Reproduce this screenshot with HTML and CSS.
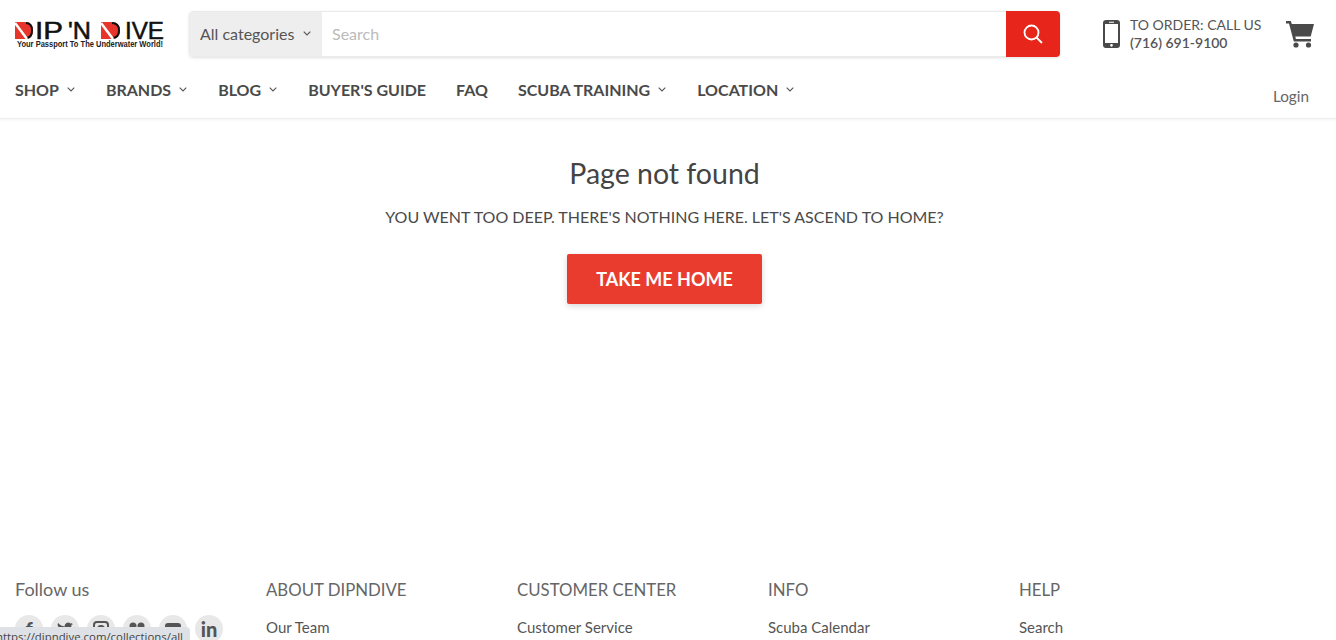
FILE: index.html
```html
<!DOCTYPE html>
<html lang="en">
<head>
<meta charset="utf-8">
<title>Page not found</title>
<link rel="stylesheet" href="styles.css">
</head>
<body>
<header class="site-header">
  <div class="top-row">
    <a class="logo" href="#" aria-label="Dip 'N Dive">
      <svg width="150" height="28" viewBox="0 0 150 28">
        <path class="logo-red" d="M0 1h10c5 0 8 3 8 8.500S15 18 10 18H0z"/>
        <path class="logo-arc" d="M11 2c4 0 6 3 6 7.500S15 17 11 17"/>
        <path class="logo-cut" d="M0 2l12 16"/>
        <text class="logo-big" x="20" y="18" textLength="28" lengthAdjust="spacingAndGlyphs">IP</text>
        <text class="logo-big" x="53" y="18" textLength="23" lengthAdjust="spacingAndGlyphs">'N</text>
        <path class="logo-red" d="M86 1h10c6 0 9 3 9 8.500S102 18 96 18H86z"/>
        <path class="logo-arc" d="M97 2c4.500 0 7 3 7 7.500S101.500 17 97 17"/>
        <path class="logo-cut" d="M86 2l12 16"/>
        <text class="logo-big" x="110" y="18" textLength="39" lengthAdjust="spacingAndGlyphs">IVE</text>
        <text class="logo-small" x="2" y="26" textLength="146" lengthAdjust="spacingAndGlyphs">Your Passport To The Underwater World!</text>
      </svg>
    </a>
    <form class="search">
      <div class="category">
        <span>All categories</span>
        <svg class="chev" width="8" height="5" viewBox="0 0 8 5"><path d="M.7.7L4 4l3.3-3.3"/></svg>
      </div>
      <div class="search-input">Search</div>
      <div class="search-btn">
        <svg width="20" height="20" viewBox="0 0 20 20"><circle cx="8.5" cy="8.500" r="7"/><path d="M13.500 13.500L19 19"/></svg>
      </div>
    </form>
    <div class="order">
      <svg class="phone" width="17" height="28" viewBox="0 0 17 28"><path fill-rule="evenodd" d="M3 0h11a3 3 0 0 1 3 3v22a3 3 0 0 1-3 3H3a3 3 0 0 1-3-3V3a3 3 0 0 1 3-3zM2 4v19h13V4zM6 1.800v.9h5v-.9zM8.500 23.900a1.400 1.400 0 1 0 0 2.800 1.400 1.400 0 0 0 0-2.800z"/></svg>
      <div class="order-text">
        <div>TO ORDER: CALL US</div>
        <div class="order-num">(716) 691-9100</div>
      </div>
    </div>
    <svg class="cart" width="28" height="28" viewBox="0 0 28 28"><path d="M0 1h4.800l1 3H28l-3.300 12.500H9.300l.6 2.500H25v2.500H7.800L3 3.500H0z"/><circle cx="10" cy="25" r="2.600"/><circle cx="22.500" cy="25" r="2.600"/></svg>
  </div>
  <div class="nav-row">
    <nav class="nav">
      <a href="#">SHOP<svg class="chev nav-chev" width="9" height="5" viewBox="0 0 9 5"><path d="M.7.7L4 4l3.300-3.300"/></svg></a>
      <a href="#">BRANDS<svg class="chev nav-chev" width="9" height="5" viewBox="0 0 9 5"><path d="M.7.7L4 4l3.300-3.300"/></svg></a>
      <a href="#">BLOG<svg class="chev nav-chev" width="9" height="5" viewBox="0 0 9 5"><path d="M.7.7L4 4l3.300-3.300"/></svg></a>
      <a href="#">BUYER'S GUIDE</a>
      <a href="#">FAQ</a>
      <a href="#">SCUBA TRAINING<svg class="chev nav-chev" width="9" height="5" viewBox="0 0 9 5"><path d="M.7.7L4 4l3.300-3.300"/></svg></a>
      <a href="#">LOCATION<svg class="chev nav-chev" width="9" height="5" viewBox="0 0 9 5"><path d="M.7.7L4 4l3.300-3.300"/></svg></a>
    </nav>
    <a class="login" href="#">Login</a>
  </div>
</header>
<main class="not-found">
  <h1>Page not found</h1>
  <p>YOU WENT TOO DEEP. THERE'S NOTHING HERE. LET'S ASCEND TO HOME?</p>
  <a class="home-btn" href="#">TAKE ME HOME</a>
</main>
<footer class="footer">
  <div class="col">
    <h4 class="follow">Follow us</h4>
    <div class="socials">
      <span class="social">f</span>
      <span class="social"><svg width="16" height="14" viewBox="0 0 16 14"><path d="M16 2c-.6.300-1.200.4-1.900.5.700-.4 1.200-1 1.400-1.800-.6.400-1.300.6-2.100.8A3.300 3.300 0 0 0 7.800 4.500C5.100 4.400 2.700 3.100 1.100 1.100.2 2.600.7 4.500 2.100 5.400c-.5 0-1-.2-1.500-.4 0 1.600 1.100 2.900 2.600 3.200-.5.100-1 .2-1.500.1.400 1.300 1.600 2.200 3.100 2.300A6.600 6.600 0 0 1 0 11.900 9.300 9.300 0 0 0 14.300 3.600c.7-.4 1.200-1 1.700-1.600z"/></svg></span>
      <span class="social"><svg width="16" height="16" viewBox="0 0 16 16"><path fill-rule="evenodd" d="M4 0h8a4 4 0 0 1 4 4v8a4 4 0 0 1-4 4H4a4 4 0 0 1-4-4V4a4 4 0 0 1 4-4zm0 2a2 2 0 0 0-2 2v8a2 2 0 0 0 2 2h8a2 2 0 0 0 2-2V4a2 2 0 0 0-2-2zm4 2a4 4 0 1 1 0 8 4 4 0 0 1 0-8zm0 2a2 2 0 1 0 0 4 2 2 0 0 0 0-4z"/></svg></span>
      <span class="social"><svg width="16" height="14" viewBox="0 0 16 14"><circle cx="4" cy="4" r="3.500"/><circle cx="12" cy="4" r="3.500"/></svg></span>
      <span class="social"><svg width="16" height="12" viewBox="0 0 16 12"><rect width="16" height="12" rx="3"/></svg></span>
      <span class="social">in</span>
    </div>
  </div>
  <div class="col">
    <h4>ABOUT DIPNDIVE</h4>
    <a href="#">Our Team</a>
  </div>
  <div class="col">
    <h4>CUSTOMER CENTER</h4>
    <a href="#">Customer Service</a>
  </div>
  <div class="col">
    <h4>INFO</h4>
    <a href="#">Scuba Calendar</a>
  </div>
  <div class="col">
    <h4>HELP</h4>
    <a href="#">Search</a>
  </div>
</footer>
<div class="status">https://dipndive.com/collections/all</div>
</body>
</html>
```
FILE: styles.css
```css
* { box-sizing: border-box; }
html, body { margin: 0; height: 640px; overflow: hidden; }
body { font-family: Lato, "Liberation Sans", sans-serif; color: #4a4a4a; background: #fff; }
a { color: inherit; text-decoration: none; }

.site-header { height: 119px; border-bottom: 1px solid #eee; box-shadow: 0 1px 3px rgba(0,0,0,.05); }
.top-row { display: flex; align-items: center; height: 68px; padding: 0 22px 0 15px; }
.logo { display: block; width: 150px; height: 28px; margin-right: 24px; margin-top: 1px; }
.logo svg { display: block; }
.logo-red { fill: #e7352c; }
.logo-arc { fill: none; stroke: #111; stroke-width: 2; }
.logo-cut { stroke: #fff; stroke-width: 2.500; fill: none; }
.logo-big { font: 400 23px "Liberation Sans", sans-serif; fill: #111; stroke: #111; stroke-width: .5; }
.logo-small { font: 700 8.500px "Liberation Sans", sans-serif; fill: #222; }

.search { display: flex; width: 871px; height: 46px; border: 1px solid #eaeaea; border-radius: 4px; box-shadow: 0 1px 3px rgba(0,0,0,.12); }
.category { display: flex; align-items: center; gap: 9px; width: 132px; padding: 0 0 2px 10px; background: #eee; font-size: 16px; color: #555; border-radius: 3px 0 0 3px; }
.chev { fill: none; stroke: #555; stroke-width: 1.100; flex: none; }
.search-input { flex: 1; display: flex; align-items: center; padding: 0 0 2px 10px; font-size: 16px; color: #bbb; }
.search-btn { display: flex; align-items: center; justify-content: center; width: 54px; margin: -1px; background: #e8251a; border-radius: 0 4px 4px 0; }
.search-btn svg { fill: none; stroke: #fff; stroke-width: 1.800; }

.order { display: flex; align-items: center; gap: 10px; margin-left: 43px; }
.phone { fill: #4a4a4a; }
.order-text { font-size: 14px; line-height: 18px; color: #555; }
.order-num { font-weight: 600; }
.cart { fill: #4a4a4a; margin-left: auto; }

.nav-row { display: flex; justify-content: space-between; padding: 0 27px 0 15px; }
.nav { display: flex; gap: 30px; padding-top: 10px; }
.nav a { display: flex; align-items: center; gap: 7px; height: 22px; font-size: 16px; font-weight: 700; color: #4a4a4a; }
.nav-chev { margin: 1px 0 0 1px; }
.login { font-size: 15.300px; color: #666; margin-top: 18px; line-height: 20px; }

.not-found { display: flex; flex-direction: column; align-items: center; height: 456px; padding: 36px 7px 0 0; }
.not-found h1 { margin: 0; font-size: 28.500px; line-height: 36px; font-weight: 400; color: #444; }
.not-found p { margin: 15px 0 0; font-size: 16px; line-height: 22px; color: #4a4a4a; }
.home-btn { display: flex; align-items: center; justify-content: center; width: 195px; height: 50px; margin-top: 26px; background: #e93c2f; color: #fff; font-size: 18px; font-weight: 700; border-radius: 2px; box-shadow: 0 2px 6px rgba(0,0,0,.16); }

.footer { display: grid; grid-template-columns: repeat(5, 251px); padding: 0 15px; }
.col h4 { margin: 0 0 12px; font-size: 16.800px; line-height: 29px; font-weight: 400; color: #666; }
.col .follow { font-size: 18px; line-height: 28px; }
.col a { display: block; font-size: 15px; line-height: 22px; color: #555; }
.socials { display: flex; gap: 8px; }
.social { display: flex; align-items: center; justify-content: center; width: 28px; height: 28px; border-radius: 50%; background: #e8e8e8; font-weight: 900; font-size: 20px; color: #555; fill: #555; }
.status { position: fixed; left: 0; bottom: 0; height: 13px; width: 190px; overflow: hidden; white-space: nowrap; background: #dee1e6; border-top-right-radius: 4px; font: 11.400px/19px "Open Sans", sans-serif; color: #444; text-indent: -4px; }
```
